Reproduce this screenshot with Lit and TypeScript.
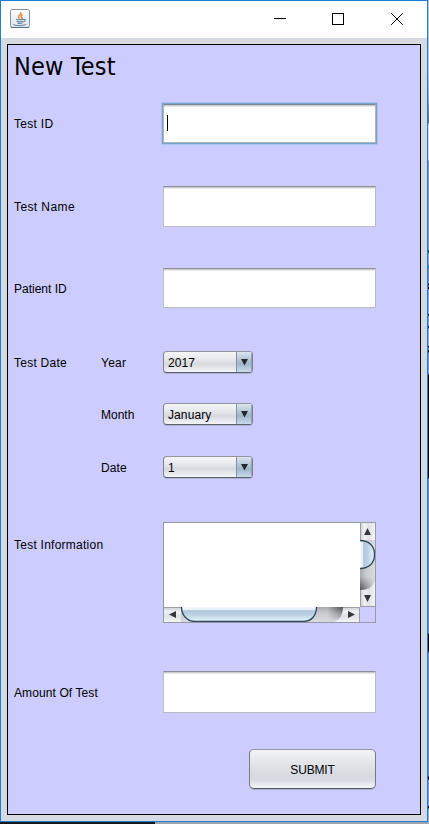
import { LitElement, html, css, svg } from "lit";
import { customElement, property } from "lit/decorators.js";

@customElement("text-field")
class TextField extends LitElement {
  @property({ type: Boolean, reflect: true }) active = false;
  static styles = css`
    :host { display: block; box-sizing: border-box; width: 213px; height: 41px; background: #fff;
      border: 1px solid #bbbcc2; border-top-color: #8d8e95; box-shadow: inset 0 1px #cbccd0, inset 0 2px #e9e9eb; }
    :host([active]) { border-color: #b3b6b9; border-top-color: #808890;
      box-shadow: inset 0 1px #cbccd0, inset 0 2px #e9e9eb, 0 0 0 1px #73a4d1, 0 0 0 2px #afc4ec; }
    .caret { width: 1px; height: 16px; margin: 10px 0 0 3px; background: #000; }
  `;
  render() { return this.active ? html`<div class="caret"></div>` : null; }
}

@customElement("combo-box")
class ComboBox extends LitElement {
  @property() value = "";
  static styles = css`
    :host { display: flex; box-sizing: border-box; width: 90px; height: 22px; border-radius: 4px; overflow: hidden;
      border: 1px solid #7d828b; border-top-color: #92959d; border-bottom-color: #5c626d;
      background: linear-gradient(#f6f6f8, #e4e6ea 40%, #d6d9df 60%, #f3f5f9); box-shadow: 0 1px #aeb0d3; }
    .value { flex: 1; padding-left: 4px; line-height: 22px; white-space: nowrap; letter-spacing: .1px; }
    .arrow { width: 15px; border-left: 1px solid #7c94a9; background: linear-gradient(#dce5ed, #b3c5d4 40%, #a0b6c8 60%, #c9dcec);
      box-shadow: inset -1px 0 #8ba3b8; }
    svg { display: block; }
  `;
  render() {
    return html`<div class="value">${this.value}</div>
      <div class="arrow"><svg width="15" height="20"><path d="M4 7h7L7.500 13.500z" fill="#23282d"/></svg></div>`;
  }
}

@customElement("scroll-area")
class ScrollArea extends LitElement {
  static styles = css`
    :host { display: grid; box-sizing: border-box; width: 213px; height: 101px; grid-template: 84px 15px / 196px 15px;
      border: 1px solid #9799a3; }
    .view { background: #fff; }
    svg { display: block; }
  `;
  render() {
    return html`<div class="view"></div>
      <svg width="15" height="84" viewBox="0 0 15 84">
        <defs>
          <linearGradient id="vb"><stop stop-color="#c9cbd0"/><stop offset=".3" stop-color="#f0f1f3"/><stop offset=".6" stop-color="#dfe1e5"/><stop offset="1" stop-color="#f3f4f6"/></linearGradient>
          <linearGradient id="vt"><stop stop-color="#a9aab0"/><stop offset=".4" stop-color="#c9cad0"/><stop offset="1" stop-color="#dadbe0"/></linearGradient>
          <linearGradient id="vk"><stop stop-color="#f5faff"/><stop offset=".2" stop-color="#e2edf6"/><stop offset=".25" stop-color="#b0c7dc"/><stop offset=".55" stop-color="#bdd2e3"/><stop offset="1" stop-color="#e4f6ff"/></linearGradient>
          <linearGradient id="vs" x2="0" y2="1"><stop offset=".5" stop-color="#333" stop-opacity="0"/><stop offset="1" stop-color="#333" stop-opacity=".75"/></linearGradient>
          <linearGradient id="vm"><stop stop-color="#fff"/><stop offset="1" stop-color="#000"/></linearGradient>
          <mask id="vf"><rect width="15" height="84" fill="url(#vm)"/></mask>
        </defs>
        <rect width="15" height="84" fill="url(#vb)"/>
        <path d="M0 17H15V58Q12 67 0 67z" fill="url(#vt)"/>
        <path d="M0 40H15V58Q12 67 0 67z" fill="url(#vs)" mask="url(#vf)"/>
        <path d="M0 17.500C8 17.500 14.500 22 14.500 31.500S8 45.500 0 45.500" fill="url(#vk)" stroke="#2d4659" stroke-width="1.300"/>
        <path d="M.5 0V17M.5 67V84M0 83.500H15" stroke="#9b9da3" fill="none"/>
        <path d="M4 12h7L7.500 5zM4 72h7L7.500 79z" fill="#36383b"/>
      </svg>
      <svg width="196" height="15" viewBox="0 0 196 15">
        <defs>
          <linearGradient id="hb" x2="0" y2="1"><stop stop-color="#c9cbd0"/><stop offset=".3" stop-color="#f0f1f3"/><stop offset=".6" stop-color="#dfe1e5"/><stop offset="1" stop-color="#f3f4f6"/></linearGradient>
          <linearGradient id="ht" x2="0" y2="1"><stop stop-color="#a9aab0"/><stop offset=".4" stop-color="#c9cad0"/><stop offset="1" stop-color="#dadbe0"/></linearGradient>
          <linearGradient id="hk" x2="0" y2="1"><stop stop-color="#f5faff"/><stop offset=".2" stop-color="#e2edf6"/><stop offset=".25" stop-color="#b0c7dc"/><stop offset=".55" stop-color="#bdd2e3"/><stop offset="1" stop-color="#e4f6ff"/></linearGradient>
          <linearGradient id="hs"><stop offset=".4" stop-color="#333" stop-opacity="0"/><stop offset="1" stop-color="#333" stop-opacity=".75"/></linearGradient>
          <linearGradient id="hm" x2="0" y2="1"><stop stop-color="#fff"/><stop offset="1" stop-color="#000"/></linearGradient>
          <mask id="hf"><rect width="196" height="15" fill="url(#hm)"/></mask>
        </defs>
        <rect width="196" height="15" fill="url(#hb)"/>
        <path d="M17 0V15H170Q179 12 179 0z" fill="url(#ht)"/>
        <path d="M153 0V15H170Q179 12 179 0z" fill="url(#hs)" mask="url(#hf)"/>
        <path d="M17.500 0C17.500 8 23 14.500 31 14.500H139C148 14.500 152.500 8 152.500 0" fill="url(#hk)" stroke="#2d4659" stroke-width="1.300"/>
        <path d="M0 .5H17M179 .5H196M195.500 0V15" stroke="#9b9da3" fill="none"/>
        <path d="M12 4v7L5 7.500zM184 4v7l7-3.500z" fill="#36383b"/>
      </svg>`;
  }
}

const cup = svg`
  <rect x=".5" y=".5" width="19" height="18" rx="2" fill="url(#face)" stroke="#7f93a5"/>
  <path d="M1 18.500h18" stroke="#53738c"/>
  <path d="M10.800 3Q11.500 4.500 9.500 6T9.500 9.500M12.500 5.500Q10 7 11.500 8.200T11 10" fill="none" stroke="#e58a42" stroke-width="1.500"/>
  <path d="M6 10.300Q9.500 11.300 13.500 10.300M6.500 12.300Q9.500 13.200 13 12.200M7.500 14.100Q10 14.700 12.500 14M13.500 10.500Q16 10 15.200 11.500T12.700 13M4 15.200Q3.500 16.700 10 16.500T15.500 15" fill="none" stroke="#6885a1" stroke-width="1.100"/>`;

@customElement("app-root")
class AppRoot extends LitElement {
  static styles = css`
    :host { display: grid; grid-template: 822px 2px / 428px 1px; width: 429px; height: 824px; overflow: hidden;
      font: 12px "Liberation Sans", Arial, sans-serif; color: #000; }
    .window { box-sizing: border-box; border: 1px solid #1a7fd4; background: #d6d9df; }
    .side { background: linear-gradient(#b4c6cf 0 75px, #93a8b2 97px, #52666c 123px, #d3d7e2 124px 160px, #8595ab 161px 250px,
      #111 251px 252px, #8d9cb8 253px 265px, #1673b8 266px 268px, #8090b5 269px 283px, #111 284px 285px, #8090b5 286px 287px,
      #000 287px 289px, #8d9fd2 289px 314px, #111 314px 315px, #8999b5 316px 326px, #053b62 326px 328px, #98a5bd 329px 346px,
      #111 346px 347px, #8d9fd2 348px 350px, #000 350px 352px, #8090cc 353px 374px, #000 375px 478px, #7389be 479px 633px,
      #000 634px 651px, #7389be 653px 776px, #000 777px 779px, #8594c9 780px 806px, #000 806px 808px, #9aa5c4 809px); }
    .below { grid-column: 1 / 3; background: linear-gradient(90deg, #15171a 155px, #a0a5ad 155px); }
    .titlebar { display: flex; height: 37px; background: #fff; }
    .icon { margin: 8px 0 0 9px; }
    .controls { margin-left: auto; }
    .panel { box-sizing: border-box; width: 414px; height: 771px; margin: 6px 0 0 6px; padding-left: 6px;
      border: 1px solid #000; background: #ccccff; }
    h1 { margin: 0; height: 59px; font: 400 25px/43px "DejaVu Sans Condensed", "DejaVu Sans", sans-serif;
      font-stretch: condensed; letter-spacing: .2px; }
    .row { display: grid; grid-template-columns: 87px 62px 213px; align-items: center; }
    .row > :last-child { grid-column: 3; }
    .f1 { height: 39px; } .f2 { height: 41px; margin-top: 43px; } .f3 { height: 40px; margin-top: 41px; }
    .f1 text-field { height: 39px; } .f3 text-field { height: 40px; }
    .f1 span { letter-spacing: .3px; } .f2 span { letter-spacing: .4px; }
    .f3 span, .f4 span, .c1 span, .c2 span, .c3 span { padding-top: 2px; }
    .f4 span, .c3 span { letter-spacing: .1px; }
    .c1 span { letter-spacing: .25px; }
    .c1 { height: 22px; margin-top: 43px; } .c2 { height: 22px; margin-top: 30px; } .c3 { height: 22px; margin-top: 31px; }
    .area { height: 101px; margin-top: 44px; align-items: start; }
    .area span { margin-top: 16px; white-space: nowrap; letter-spacing: .25px; }
    .f4 { height: 42px; margin-top: 48px; } .f4 text-field { height: 42px; }
    .month { grid-column: 2; }
    button { display: block; box-sizing: border-box; width: 127px; height: 40px; margin: 36px 0 0 235px; padding: 2px 0 0; font: inherit;
      letter-spacing: -.15px; color: #000; border: 1px solid #777a82; border-top-color: #9597a5; border-bottom-color: #565960; border-radius: 5px;
      background: linear-gradient(#f4f4f6, #e3e5e9 35%, #d6d9df 68%, #d9dce2 80%, #f2f5fa); box-shadow: 0 1px #aeb0d3; }
  `;
  render() {
    return html`
      <div class="window">
        <div class="titlebar">
          <svg class="icon" width="20" height="20"><defs><linearGradient id="face" x2="0" y2="1"><stop stop-color="#fff"/><stop offset="1" stop-color="#dce3e9"/></linearGradient></defs>${cup}</svg>
          <svg class="controls" width="155" height="37" fill="none" stroke="#000">
            <path d="M2 17.500h12M60.500 12.500h11v11h-11z" shape-rendering="crispEdges"/>
            <path d="M119.200 12.200l11.600 11.600M130.800 12.200l-11.600 11.600"/>
          </svg>
        </div>
        <div class="panel">
          <h1>New Test</h1>
          <div class="row f1"><span>Test ID</span><text-field active></text-field></div>
          <div class="row f2"><span>Test Name</span><text-field></text-field></div>
          <div class="row f3"><span>Patient ID</span><text-field></text-field></div>
          <div class="row c1"><span>Test Date</span><span>Year</span><combo-box value="2017"></combo-box></div>
          <div class="row c2"><span class="month">Month</span><combo-box value="January"></combo-box></div>
          <div class="row c3"><span class="month">Date</span><combo-box value="1"></combo-box></div>
          <div class="row area"><span>Test Information</span><scroll-area></scroll-area></div>
          <div class="row f4"><span>Amount Of Test</span><text-field></text-field></div>
          <button>SUBMIT</button>
        </div>
      </div>
      <div class="side"></div>
      <div class="below"></div>`;
  }
}
